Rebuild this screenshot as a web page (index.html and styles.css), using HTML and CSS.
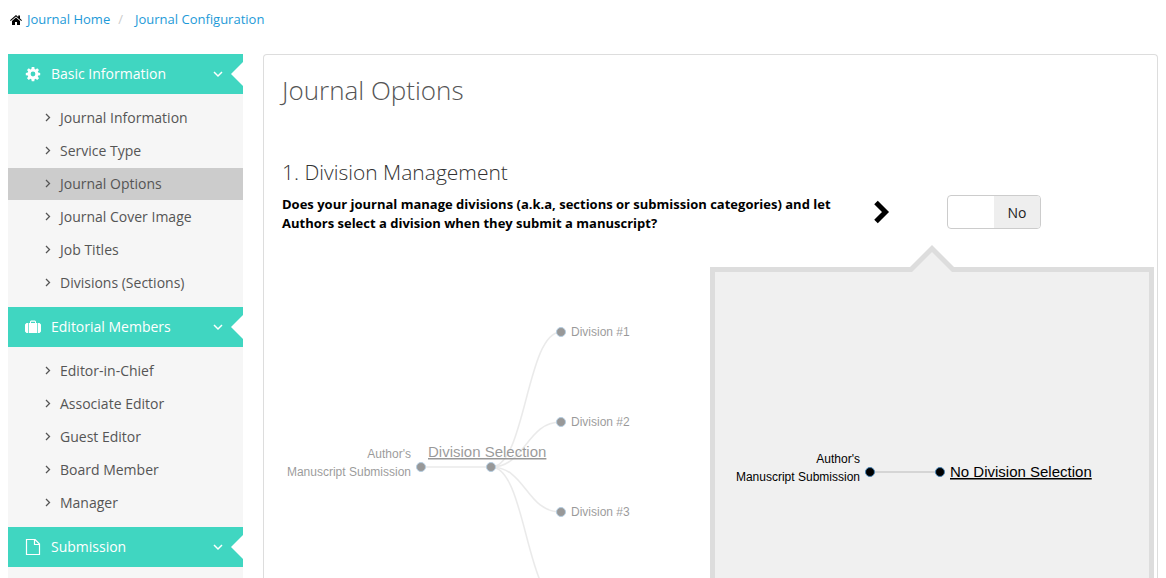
FILE: index.html
```html
<!DOCTYPE html>
<html lang="en">
<head>
<meta charset="utf-8">
<title>Journal Options</title>
<link rel="stylesheet" href="styles.css">
</head>
<body>
<svg class="defs" aria-hidden="true">
  <symbol id="chev-right" viewBox="0 0 6 9"><path d="M1 1l3.500 3.500L1 8" fill="none" stroke="currentColor" stroke-width="1.300"/></symbol>
  <symbol id="chev-down" viewBox="0 0 10 7"><path d="M1 1l4 4 4-4" fill="none" stroke="currentColor" stroke-width="1.500"/></symbol>
</svg>
<nav class="breadcrumb" aria-label="Breadcrumb">
  <svg class="home" viewBox="0 0 12 10" aria-hidden="true"><path d="M6 0L8.200 1.900V.6h1.800v2.900l2 1.800-.7.800L6 1.500.7 6.100 0 5.300z"/><path d="M6 2.500l4 3.400V10H7V7H5v3H2V5.900z"/></svg>
  <a href="#">Journal Home</a>
  <span class="slash">/</span>
  <a href="#">Journal Configuration</a>
</nav>
<div class="layout">
  <aside class="sidebar">
    <button class="group" type="button">
      <svg class="group-icon" viewBox="0 0 16 16" aria-hidden="true"><path fill="currentColor" fill-rule="evenodd" d="M6.700 1h2.600l.3 2 1 .4 1.600-1.200 1.800 1.800-1.200 1.600.4 1 2 .3v2.400l-2 .3-.4 1 1.200 1.600-1.800 1.800-1.600-1.200-1 .4-.3 2H6.700l-.3-2-1-.4L3.800 14 2 12.200l1.200-1.600-.4-1-2-.3V6.900l2-.3.4-1L2 4l1.800-1.800 1.600 1.200 1-.4zM8 5.600a2.400 2.400 0 1 0 0 4.800 2.400 2.400 0 0 0 0-4.800z"/></svg>
      <span class="group-name">Basic Information</span>
      <svg class="chev-down" aria-hidden="true"><use href="#chev-down"/></svg>
    </button>
    <ul class="items">
      <li><a href="#"><svg class="chev" aria-hidden="true"><use href="#chev-right"/></svg>Journal Information</a></li>
      <li><a href="#"><svg class="chev" aria-hidden="true"><use href="#chev-right"/></svg>Service Type</a></li>
      <li><a class="active" href="#" aria-current="page"><svg class="chev" aria-hidden="true"><use href="#chev-right"/></svg>Journal Options</a></li>
      <li><a href="#"><svg class="chev" aria-hidden="true"><use href="#chev-right"/></svg>Journal Cover Image</a></li>
      <li><a href="#"><svg class="chev" aria-hidden="true"><use href="#chev-right"/></svg>Job Titles</a></li>
      <li><a href="#"><svg class="chev" aria-hidden="true"><use href="#chev-right"/></svg>Divisions (Sections)</a></li>
    </ul>
    <button class="group" type="button">
      <svg class="group-icon" viewBox="0 0 16 16" aria-hidden="true"><path fill="currentColor" fill-rule="evenodd" d="M3.700 14V4H5V2.500L6 1.500h4l1 1V4h1.300v10zM6 4h4V2.700H6zM3 4v10H1.500L0 12.500v-7L1.500 4zM13 4h1.500L16 5.500v7L14.500 14H13z"/></svg>
      <span class="group-name">Editorial Members</span>
      <svg class="chev-down" aria-hidden="true"><use href="#chev-down"/></svg>
    </button>
    <ul class="items">
      <li><a href="#"><svg class="chev" aria-hidden="true"><use href="#chev-right"/></svg>Editor-in-Chief</a></li>
      <li><a href="#"><svg class="chev" aria-hidden="true"><use href="#chev-right"/></svg>Associate Editor</a></li>
      <li><a href="#"><svg class="chev" aria-hidden="true"><use href="#chev-right"/></svg>Guest Editor</a></li>
      <li><a href="#"><svg class="chev" aria-hidden="true"><use href="#chev-right"/></svg>Board Member</a></li>
      <li><a href="#"><svg class="chev" aria-hidden="true"><use href="#chev-right"/></svg>Manager</a></li>
    </ul>
    <button class="group" type="button">
      <svg class="group-icon" viewBox="0 0 16 16" aria-hidden="true"><path d="M1.500.5H10l4.500 4.500v10.500h-13zM9.500.5v5h5" fill="none" stroke="currentColor" stroke-width="1.200"/></svg>
      <span class="group-name">Submission</span>
      <svg class="chev-down" aria-hidden="true"><use href="#chev-down"/></svg>
    </button>
  </aside>
  <main class="panel">
    <h1>Journal Options</h1>
    <section>
      <h2>1. Division Management</h2>
      <div class="question">
        <label class="prompt" for="divisions">Does your journal manage divisions (a.k.a, sections or submission categories) and let Authors select a division when they submit a manuscript?</label>
        <svg class="arrow" viewBox="0 0 16 24" aria-hidden="true"><path d="M2 2.500l9.500 9.500L2 21.500" fill="none" stroke="#000" stroke-width="5"/></svg>
        <span class="switch"><input id="divisions" type="checkbox"><span class="switch-label">No</span></span>
      </div>
      <div class="choices">
        <div class="choice faded">
          <svg class="tree" width="428" height="400">
            <g class="links"><path d="M139 200H209"/><path d="M209 200C244 200 244 65 279 65"/><path d="M209 200C244 200 244 155 279 155"/><path d="M209 200C244 200 244 245 279 245"/><path d="M209 200C244 200 244 335 279 335"/></g>
            <g class="nodes"><circle cx="139" cy="200" r="4.500"/><circle cx="209" cy="200" r="4.500"/><circle cx="279" cy="65" r="4.500"/><circle cx="279" cy="155" r="4.500"/><circle cx="279" cy="245" r="4.500"/></g>
            <text class="end" x="129" y="191">Author's</text>
            <text class="end" x="129" y="209">Manuscript Submission</text>
            <text class="key" x="146" y="190">Division Selection</text>
            <text x="289" y="69">Division #1</text>
            <text x="289" y="159">Division #2</text>
            <text x="289" y="249">Division #3</text>
          </svg>
        </div>
        <div class="choice selected">
          <svg class="notch" viewBox="0 0 44 27" aria-hidden="true"><path d="M0 22L22 0l22 22v5H0z" fill="#ddd"/><path d="M2 27L22 7l20 20z" fill="#f0f0f0"/></svg>
          <svg class="tree" width="434" height="400">
            <g class="links"><path d="M155 200H225"/></g>
            <g class="nodes"><circle cx="155" cy="200" r="4.500"/><circle cx="225" cy="200" r="4.500"/></g>
            <text class="end" x="145" y="191">Author's</text>
            <text class="end" x="145" y="209">Manuscript Submission</text>
            <text class="key" x="235" y="205">No Division Selection</text>
          </svg>
        </div>
      </div>
    </section>
  </main>
</div>
</body>
</html>
```
FILE: styles.css
```css
* { box-sizing: border-box; }
body {
  margin: 0;
  height: 100vh;
  overflow: hidden;
  background: #fff;
  color: #000;
  font: 13px/19px "Open Sans", sans-serif;
  display: flex;
  flex-direction: column;
}
a { color: #1d9ad8; text-decoration: none; }
.defs { display: none; }

.breadcrumb { display: flex; flex: none; align-items: center; padding: 10px 10px 0; height: 29px; }
.home { width: 12px; height: 10px; margin-right: 5px; }
.slash { color: #ccc; padding: 0 12px 0 8px; }

.layout { display: flex; flex: 1; min-height: 0; overflow: hidden; gap: 20px; margin-top: 25px; padding: 0 8px; }
.sidebar { flex: 0 0 235px; background: #f6f6f6; }
.group {
  display: flex;
  align-items: center;
  width: 100%;
  height: 40px;
  padding: 0 20px 0 17px;
  border: 0;
  background: #40d6c1;
  color: #fff;
  font: 14px/20px "Open Sans", sans-serif;
  text-align: left;
  position: relative;
}
.group::after {
  content: "";
  position: absolute;
  right: 0;
  top: 8px;
  border: 12px solid transparent;
  border-left-width: 0;
  border-right-color: #fff;
}
.group-icon { width: 16px; height: 16px; margin-right: 10px; }
.group-name { flex: 1; }
.chev-down { width: 10px; height: 7px; }
.items { list-style: none; margin: 0; padding: 8px 0; display: grid; gap: 1px; }
.items a {
  display: flex;
  align-items: center;
  gap: 9px;
  height: 32px;
  padding: 0 0 2px 37px;
  color: #555;
  font-size: 14px;
}
.items .active { background: #ccc; }
.chev { width: 6px; height: 9px; }

.panel {
  flex: 1;
  min-width: 0;
  padding: 18px 3px 0 18px;
  border: 1px solid #ddd;
  border-bottom: 0;
  border-radius: 4px 4px 0 0;
  overflow: hidden;
}
h1 { margin: 0; font-size: 26px; line-height: 34px; font-weight: 300; color: #555; }
h2 { margin: 50px 0 8px; font-size: 21px; line-height: 30px; font-weight: 300; color: #333; }
.question { display: flex; align-items: flex-start; height: 38px; }
.prompt { font-weight: 700; flex: 0 1 592px; padding-right: 36px; }
.arrow { width: 16px; height: 24px; flex: none; margin-top: 5px; }
.switch {
  position: relative;
  display: flex;
  width: 94px;
  height: 34px;
  margin: 0 0 0 57px;
  flex: none;
  border: 1px solid #ccc;
  border-radius: 4px;
  overflow: hidden;
}
.switch input { position: absolute; inset: 0; width: 100%; height: 100%; margin: 0; opacity: 0; }
.switch-label {
  margin-left: auto;
  width: 46px;
  background: #eee;
  font-size: 14px;
  line-height: 34px;
  text-align: center;
  color: #222;
}
.choices { display: flex; margin-top: 34px; }
.choice { position: relative; min-height: 410px; }
.faded { flex: 0 0 428px; opacity: .4; }
.selected { flex: 1; border: 5px solid #ddd; background: #f0f0f0; }
.notch { position: absolute; left: 50%; bottom: 100%; width: 44px; height: 27px; margin-left: -22px; }
.tree { display: block; font: 12px "Liberation Sans", Arial, sans-serif; }
.links path { fill: none; stroke: #ccc; stroke-width: 1.5; }
.nodes circle { fill: #000; stroke: steelblue; stroke-width: 1px; }
.end { text-anchor: end; }
.key {
  font-size: 15px;
  text-decoration: underline;
  text-decoration-thickness: 2px;
  text-decoration-skip-ink: none;
  text-underline-offset: 3px;
}
```
